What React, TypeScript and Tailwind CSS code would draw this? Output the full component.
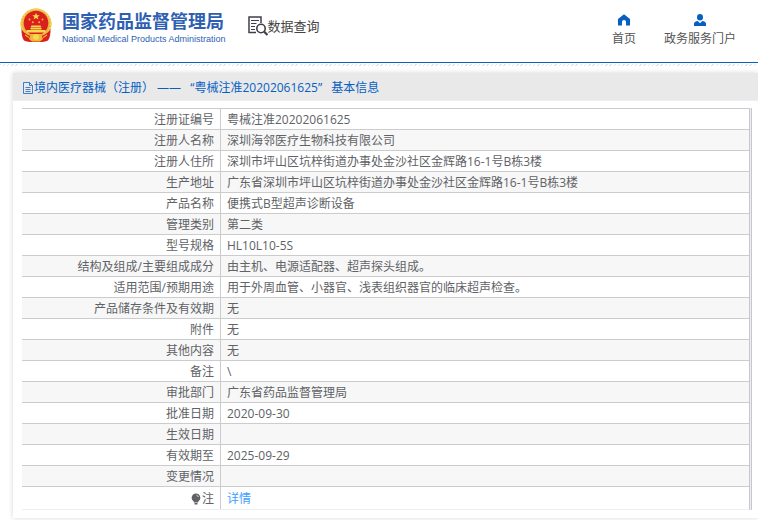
import type { ReactNode } from 'react';

interface Row {
  label: string;
  value: string;
}

const rows: Row[] = [
  { label: '注册证编号', value: '粤械注准20202061625' },
  { label: '注册人名称', value: '深圳海邻医疗生物科技有限公司' },
  { label: '注册人住所', value: '深圳市坪山区坑梓街道办事处金沙社区金辉路16-1号B栋3楼' },
  { label: '生产地址', value: '广东省深圳市坪山区坑梓街道办事处金沙社区金辉路16-1号B栋3楼' },
  { label: '产品名称', value: '便携式B型超声诊断设备' },
  { label: '管理类别', value: '第二类' },
  { label: '型号规格', value: 'HL10L10-5S' },
  { label: '结构及组成/主要组成成分', value: '由主机、电源适配器、超声探头组成。' },
  { label: '适用范围/预期用途', value: '用于外周血管、小器官、浅表组织器官的临床超声检查。' },
  { label: '产品储存条件及有效期', value: '无' },
  { label: '附件', value: '无' },
  { label: '其他内容', value: '无' },
  { label: '备注', value: '\\' },
  { label: '审批部门', value: '广东省药品监督管理局' },
  { label: '批准日期', value: '2020-09-30' },
  { label: '生效日期', value: '' },
  { label: '有效期至', value: '2025-09-29' },
  { label: '变更情况', value: '' },
];

function Emblem() {
  return (
    <svg viewBox="0 0 32 36" className="w-8 h-9" aria-hidden="true">
      <circle cx="16" cy="16" r="15.5" fill="#e9b53a" />
      <circle cx="16" cy="16" r="14.6" fill="none" stroke="#f7d560" strokeWidth="1.6" strokeDasharray="2 1" />
      <path d="M1.500 21c0 5 .5 9 2.500 11.500 3 1.700 7 1.500 12 1.500s9 .2 12-1.500c2-2.500 2.500-6.500 2.500-11.500-3 5-8 7.500-14.500 7.500S4.500 26 1.500 21z" fill="#d9201c" />
      <circle cx="16" cy="15" r="12.3" fill="#d9201c" />
      <path d="M16 4.800l1 2.500h2.700l-2.100 1.700.8 2.600-2.400-1.500-2.400 1.500.8-2.600-2.100-1.700H15z" fill="#f8d84c" />
      <g fill="#f3b33a">
        <circle cx="9.500" cy="11.500" r="1" />
        <circle cx="22.500" cy="11.500" r="1" />
        <circle cx="12.800" cy="14.200" r="1" />
        <circle cx="19.200" cy="14.200" r="1" />
      </g>
      <path d="M11.500 17.500h9l1 2h-11zM10.500 20h11v1.500h-11zM6.500 22h19v2.500h-19z" fill="#f8d84c" />
      <path d="M11 26h10l2 5-3 2.500h-8L9 31z" fill="#f0b83a" />
      <circle cx="16" cy="29" r="3" fill="#f8d84c" />
      <path d="M5 27l4 2.500M27 27l-4 2.500" stroke="#f0b83a" strokeWidth="1.200" />
    </svg>
  );
}

function QueryIcon() {
  return (
    <svg viewBox="0 0 20 20" className="w-5 h-5" fill="none" stroke="#3e3f4c" aria-hidden="true">
      <path d="M8 16.500H1V1h12v6" strokeWidth="1.500" />
      <path d="M3 4.500h8M3 7.500h5.500M3 10.500h4M3 13.500h4" strokeWidth="1" />
      <circle cx="13" cy="12.500" r="4.200" strokeWidth="1.600" />
      <path d="M16 15.500l3.500 3.500" strokeWidth="2.200" />
    </svg>
  );
}

function HomeIcon() {
  return (
    <svg viewBox="0 0 12 12" className="w-3 h-3" fill="#0560c2" aria-hidden="true">
      <path d="M6 .3L12 5v6.500H8V8a2 2 0 0 0-4 0v3.500H0V5z" />
    </svg>
  );
}

function UserIcon() {
  return (
    <svg viewBox="0 0 12 12" className="w-3 h-3" fill="#0560c2" aria-hidden="true">
      <ellipse cx="6" cy="3.200" rx="3" ry="3.200" />
      <path d="M0 12V9.500C.3 8 2 7.300 3.700 7L6 9.200 8.300 7c1.700.3 3.400 1 3.700 2.500V12z" />
    </svg>
  );
}

function DocIcon() {
  return (
    <svg viewBox="0 0 11 12" className="w-[11px] h-3 shrink-0" fill="none" stroke="#1763c0" aria-hidden="true">
      <path d="M.5.500h6l3 3v8h-9zM6.500.500v3h3M2.500 5.500h5M2.500 7.500h5M2.500 9.500h5" strokeWidth=".8" />
    </svg>
  );
}

function BulbIcon() {
  return (
    <svg viewBox="0 0 10 12" className="w-2.5 h-3" fill="#606266" aria-hidden="true">
      <path d="M5 .5a4.300 4.300 0 0 1 2.500 7.800L7 9.500H3l-.5-1.200A4.300 4.300 0 0 1 5 .5zM3.500 10h3v1.500h-3z" />
      <path d="M5.500 2.200c1 .2 1.600.9 1.800 1.800" fill="none" stroke="#fff" strokeWidth=".8" />
    </svg>
  );
}

function NavLink({ icon, label }: { icon: ReactNode; label: string }) {
  return (
    <a href="#" className="flex flex-col items-center gap-[5px] text-xs leading-4 text-[#555]">
      {icon}
      {label}
    </a>
  );
}

export default function App() {
  return (
    <div className="bg-white pb-0.5 font-['Open_Sans','Noto_Sans_CJK_SC',sans-serif] text-xs text-[#606266]">
      <header className="flex h-[63px] items-start border-b border-[#0560c2] pl-5 pr-[22px]">
        <div className="flex pt-2">
          <Emblem />
          <div className="ml-2.5 pt-[3px] text-[#2f5fb3]">
            <h1 className="text-lg leading-5 font-bold">国家药品监督管理局</h1>
            <p className="mt-0.5 font-['Liberation_Sans',sans-serif] text-[9px] leading-3">
              National Medical Products Administration
            </p>
          </div>
        </div>
        <div className="ml-[22px] flex items-center pt-4 text-[#444]">
          <QueryIcon />
          <span className="text-[13px] leading-5">数据查询</span>
        </div>
        <nav className="ml-auto flex gap-7 pt-3.5">
          <NavLink icon={<HomeIcon />} label="首页" />
          <NavLink icon={<UserIcon />} label="政务服务门户" />
        </nav>
      </header>
      <div className="mt-px h-0.5 bg-[repeating-linear-gradient(135deg,#e4e4e4_0_1px,#fff_1px_3px)]" />

      <main className="mt-[7px] ml-[13px] bg-white shadow-[0_0_5px_rgba(0,0,0,0.16)]">
        <h2 className="flex h-7 items-center border-b border-[#ebeef5] bg-[#e9e9e9] pt-0.5 pl-2.5 text-[#0560c2]">
          <DocIcon />
          <span className="leading-4">
            境内医疗器械（注册） —— <span className="mx-1.5">“粤械注准20202061625”</span> 基本信息
          </span>
        </h2>
        <div className="pt-[7px] pr-1.5 pb-2 pl-[9px]">
          <div className="border-r border-[#c8c8cc] bg-[#ebeef5] pr-px">
            <table className="w-full table-fixed border-separate border-spacing-0 border-r border-b border-r-[#c8c8cc] border-b-[#ebeef5] bg-white">
              <tbody>
                {rows.map((row) => (
                  <tr key={row.label} className="h-[21px] even:bg-[#f7f7f7]">
                    <th
                      scope="row"
                      className="w-[199px] border-t border-r border-[#ccc] pt-0.5 pr-1.5 text-right leading-4 font-normal"
                    >
                      {row.label}
                    </th>
                    <td className="border-t border-[#ccc] pt-0.5 pl-1.5 leading-4">{row.value}</td>
                  </tr>
                ))}
                <tr className="h-[23px]">
                  <th scope="row" className="border-t border-r border-[#ccc] pt-0.5 pr-1.5 leading-4 font-normal">
                    <span className="flex items-center justify-end gap-px">
                      <BulbIcon />注
                    </span>
                  </th>
                  <td className="border-t border-[#ccc] pt-0.5 pl-1.5 leading-4">
                    <a href="#" className="text-[#409eff]">
                      详情
                    </a>
                  </td>
                </tr>
              </tbody>
            </table>
          </div>
        </div>
      </main>
    </div>
  );
}
